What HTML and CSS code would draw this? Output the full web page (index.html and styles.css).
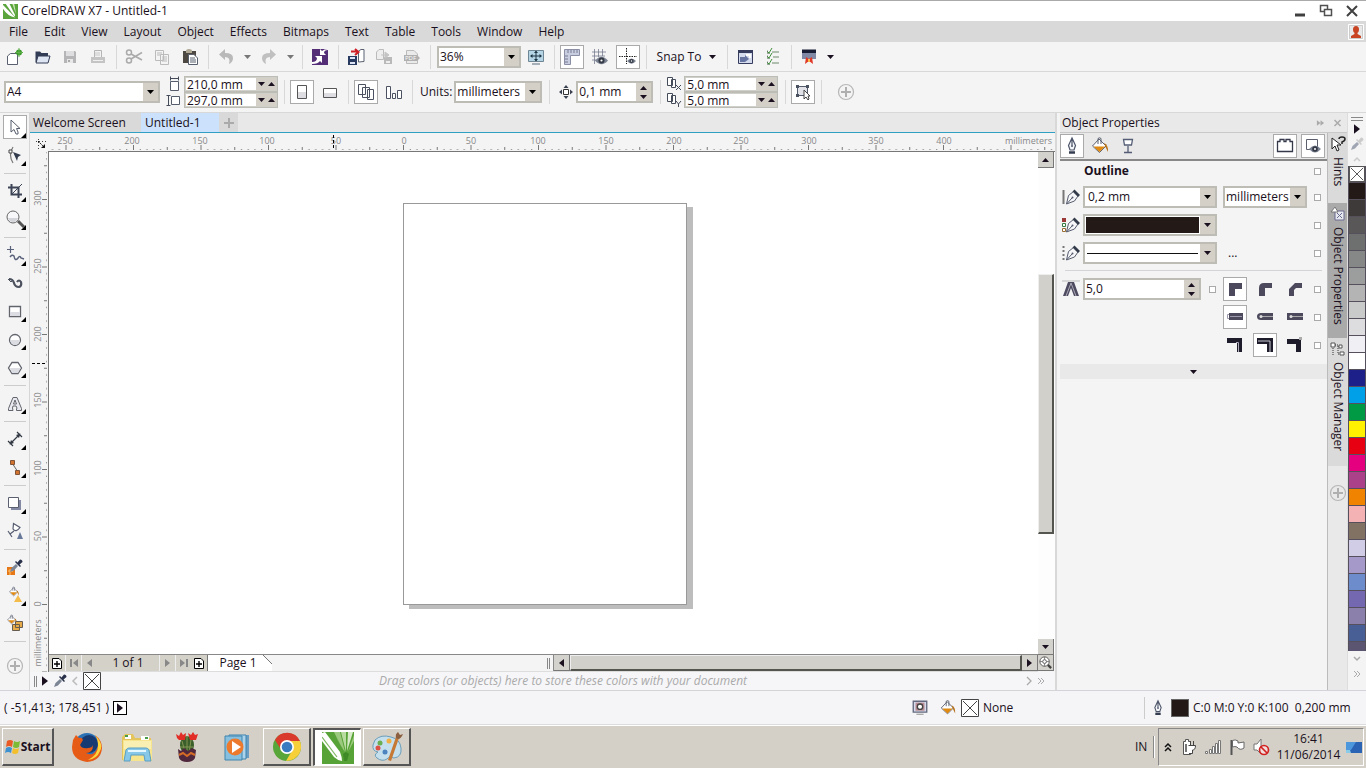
FILE: index.html
```html
<!DOCTYPE html>
<html lang="en">
<head>
<meta charset="utf-8">
<title>CorelDRAW X7 - Untitled-1</title>
<link rel="stylesheet" href="styles.css">
</head>
<body>
<svg class="sprite" aria-hidden="true">
  <symbol id="nib" viewBox="0 0 20 20"><path d="M10 2 L6.500 9.500 L8 14 H12 L13.500 9.500 Z M10 3 V9" fill="#f5f6fa" stroke="#4b5468" stroke-width="1.200"/><circle cx="10" cy="10" r="1" fill="#4b5468"/><path d="M7 16.500H13" stroke="#353d50" stroke-width="2.500"/></symbol>
  <symbol id="bucket" viewBox="0 0 20 20"><path d="M9 3 L16 10 L9.500 16.500 L2.500 10Z" fill="#fff" stroke="#596070"/><path d="M3.500 10.500H15L9.500 16Z" fill="#e08a12"/><path d="M8 8V2.500Q9.500 1 11 2.500V8" fill="none" stroke="#596070"/><path d="M14 7Q18.500 9 18 16L15.500 11Z" fill="#b8731c"/></symbol>
  <symbol id="dropper" viewBox="0 0 14 14"><path d="M1 13 L2.500 9 L7 5 L9 7 L5 11.500Z" fill="#7c8596"/><path d="M6 3 L11 8 L12 7 L10.500 5.500 L13.500 3 Q13.500 .5 11 .5 L8.500 3.500 L7 2Z" fill="currentColor"/></symbol>
  <symbol id="slantpen" viewBox="0 0 20 20"><path d="M5.500 17 L7.500 8.500 L12.500 4.500 L17 9 L13.500 14 Z M6 16.500 L11 11" fill="#f7f7f9" stroke="#555c6e"/><circle cx="11.500" cy="10.500" r="1" fill="#555c6e"/><path d="M13.500 2.500 L19 8 L17 10 L11.500 4.500Z" fill="#343c4b"/></symbol>
  <symbol id="plus" viewBox="0 0 20 20"><circle cx="10" cy="10" r="7.500" fill="none" stroke="#b6b6b6" stroke-width="1.200"/><path d="M10 5V15M5 10H15" stroke="#b0b0b0" stroke-width="2"/></symbol>
  <symbol id="leaf" viewBox="0 0 16 16"><path d="M0 0H16V16H0Z" fill="#59a53b"/><path d="M0 1L13 14.500Q5 13 0 5Z" fill="#fff"/><path d="M3 0H7L13 12L12 13Z" fill="#fff"/><path d="M10 0H12L14 11Z" fill="#cce4b8"/></symbol>
  <symbol id="eye" viewBox="0 0 12 8"><path d="M0 4Q6 -3 12 4Q6 11 0 4Z" fill="#7d8493"/><circle cx="6" cy="4" r="2.800" fill="#343a46"/><circle cx="6" cy="4" r="1" fill="#fff"/></symbol>
  <symbol id="corner" viewBox="0 0 6 6"><path d="M6 0V6H0Z" fill="#000"/></symbol>
  <symbol id="down" viewBox="0 0 7 4"><path d="M0 0H7L3.500 4Z" fill="currentColor"/></symbol>
  <symbol id="up" viewBox="0 0 7 4"><path d="M0 4H7L3.500 0Z" fill="currentColor"/></symbol>
  <symbol id="left" viewBox="0 0 5 8"><path d="M5 0V8L0 4Z" fill="currentColor"/></symbol>
  <symbol id="right" viewBox="0 0 5 8"><path d="M0 0V8L5 4Z" fill="currentColor"/></symbol>
  <symbol id="none" viewBox="0 0 18 18"><path d="M.5 .5H17.500V17.500H.5Z" fill="#fff" stroke="#444"/><path d="M2 2L16 16M16 2L2 16" stroke="#444"/></symbol>
  <symbol id="addpage" viewBox="0 0 12 12"><path d="M1.500 1.500H8L10.500 4V11.500H1.500Z" fill="#fff" stroke="#000"/><path d="M6 4V10M3 7H9" stroke="#000" stroke-width="1.400"/></symbol>
</svg>

<header class="titlebar">
  <svg class="app-logo" aria-hidden="true"><use href="#leaf"/></svg>
  <h1 class="title">CorelDRAW X7 - Untitled-1</h1>
  <div class="window-buttons">
    <button aria-label="Minimize"><svg viewBox="0 0 14 14"><path d="M2 11H12" stroke="#404040" stroke-width="3"/></svg></button>
    <button aria-label="Restore"><svg viewBox="0 0 14 14"><path d="M1.500 1.500H8.500V7.500H1.500Z" fill="#fff" stroke="#505050" stroke-width="1.500"/><path d="M5.500 5.500H12.500V11.500H5.500Z" fill="#fff" stroke="#505050" stroke-width="1.500"/></svg></button>
    <button aria-label="Close"><svg viewBox="0 0 14 14"><path d="M2 2L12 12M12 2L2 12" stroke="#404040" stroke-width="2"/></svg></button>
  </div>
</header>

<nav class="menubar" aria-label="Main menu">
  <button>File</button><button>Edit</button><button>View</button><button>Layout</button><button>Object</button><button>Effects</button><button>Bitmaps</button><button>Text</button><button>Table</button><button>Tools</button><button>Window</button><button>Help</button>
  <button class="account" aria-label="Account"><svg viewBox="0 0 16 16"><path d="M.5 .5H15.500V15.500H.5Z" fill="#e9e9e9" stroke="#fff"/><path d="M1.500 1.500H14.500V14.500H1.500Z" fill="none" stroke="#ccc"/><ellipse cx="8" cy="5.500" rx="3" ry="3.500" fill="#c84423"/><path d="M6.500 8H9.500V10L13 12V14H3V12L6.500 10Z" fill="#c84423"/></svg></button>
</nav>

<div class="toolbar" role="toolbar" aria-label="Standard">
  <button class="tool" aria-label="New"><svg viewBox="0 0 20 20"><path d="M3.500 17.500V9L6.500 6.500H13.500V17.500Z" fill="#fff" stroke="#5b6070"/><circle cx="15" cy="5.500" r="3" fill="#3b9a2a"/><path d="M15 1V10M11 5.500H19" stroke="#62b04c"/></svg></button>
  <button class="tool" aria-label="Open"><svg viewBox="0 0 20 20"><path d="M3.500 15V4.500H8L9.500 6H16V15Z" fill="#333c55"/><path d="M6 9H18L16 16H4Z" fill="#dfe6f3" stroke="#333c55"/></svg></button>
  <button class="tool" aria-label="Save"><svg viewBox="0 0 20 20"><path d="M4 4H15L16 5V16H4Z" fill="#b5b5b8"/><path d="M6 4H14V9H6Z" fill="#dedee0"/><path d="M7 12H13V16H7Z" fill="#e8e8e8"/><path d="M8 13H10V15H8Z" fill="#aaa"/></svg></button>
  <button class="tool" aria-label="Print"><svg viewBox="0 0 20 20"><path d="M6.500 10V3.500H13.500V10" fill="#f2f2f2" stroke="#b5b5b5"/><path d="M3 10H17V16H3Z" fill="#c4c4c4"/><path d="M5 13.500H15" stroke="#f0f0f0"/><path d="M7 6H12M7 8H12" stroke="#c8c8c8"/></svg></button>
  <span class="sep"></span>
  <button class="tool" aria-label="Cut"><svg viewBox="0 0 20 20" fill="none" stroke="#aaa" stroke-width="1.500"><circle cx="5" cy="5.500" r="2.500"/><circle cx="5" cy="13.500" r="2.500"/><path d="M7 7L18 13M7 12L18 5.500"/></svg></button>
  <button class="tool" aria-label="Copy"><svg viewBox="0 0 20 20" fill="#f4f4f4" stroke="#bbb"><path d="M3.500 3.500H11.500V13.500H3.500ZM8.500 7.500H16.500V17.500H8.500Z"/><path d="M5 6H10M5 8H8M10 10H15M10 12H15M10 14H15"/></svg></button>
  <button class="tool" aria-label="Paste"><svg viewBox="0 0 20 20"><path d="M3 4H16V16H3Z" fill="#4d4841"/><path d="M6 4Q6 2 9 2T12 4V6H6Z" fill="#b0a995"/><path d="M8.500 7.500H14L17.500 11V17.500H8.500Z" fill="#fff" stroke="#59606e"/><path d="M10 11H15M10 13H16M10 15H16" stroke="#59606e"/></svg></button>
  <span class="sep"></span>
  <button class="tool" aria-label="Undo"><svg viewBox="0 0 20 20"><path d="M3 7.500L9 2V6Q17 6 17 11Q17 15 13 17Q15 10 9 10V13Z" fill="#b9b9b9"/></svg></button>
  <button class="drop muted" aria-label="Undo list"><svg class="tri"><use href="#down"/></svg></button>
  <button class="tool" aria-label="Redo"><svg viewBox="0 0 20 20"><path d="M17 7.500L11 2V6Q3 6 3 11Q3 15 7 17Q5 10 11 10V13Z" fill="#c0c0c0"/></svg></button>
  <button class="drop muted" aria-label="Redo list"><svg class="tri"><use href="#down"/></svg></button>
  <span class="sep"></span>
  <button class="tool" aria-label="Search content"><svg viewBox="0 0 20 20"><path d="M2 2H18V18H2Z" fill="#542d77"/><path d="M2 15Q7 15 7 11L5 9H12V16L10 14Q8 17 2 17Z" fill="#fff"/><path d="M18 3Q14 3 14 6L16 8H10V2L12 4Q14 2 18 2Z" fill="#fff"/></svg></button>
  <span class="sep"></span>
  <button class="tool" aria-label="Import"><svg viewBox="0 0 20 20"><path d="M12.500 15V4L15 2.500H18V14.500Z" fill="#fff" stroke="#596070"/><path d="M2 9H11V18H2Z" fill="#283a60"/><path d="M4 10H9V12H4ZM4 15H9V17H4Z" fill="#dce4f5"/><path d="M5 4.500H11M9 2L12.500 5L9 8" fill="none" stroke="#cf2028" stroke-width="2"/></svg></button>
  <button class="tool" aria-label="Export"><svg viewBox="0 0 20 20"><path d="M2.500 12.500V5L5 2.500H9.500V12.500Z" fill="#eee" stroke="#bbb"/><path d="M10 10H18V17H10Z" fill="#b9b9b9"/><path d="M12 14H16V16H12Z" fill="#eee"/><path d="M7 8H13M11 5L15 8L11 11Z" fill="#c4c4c4" stroke="#c4c4c4"/></svg></button>
  <button class="tool" aria-label="Publish to PDF"><svg viewBox="0 0 20 20"><path d="M4.500 16.500V3.500H12L15.500 7V16.500Z" fill="#eaeaea" stroke="#bbb"/><path d="M2 8H15L18 11L15 14H2Z" fill="#b0b0b0"/><text x="3" y="13" font-size="6" fill="#fff">PDF</text></svg></button>
  <span class="sep"></span>
  <div class="field zoom-field"><select aria-label="Zoom level"><option>36%</option></select></div>
  <button class="tool" aria-label="Full-screen preview"><svg viewBox="0 0 20 20"><path d="M2.500 3.500H17.500V14.500H2.500Z" fill="#b5d5e6" stroke="#6f8794"/><path d="M10 4.500V13.500M5 9H15" stroke="#1d3444"/><path d="M10 3.500L12 6H8ZM10 14.500L12 12H8ZM4 9L6.500 7V11ZM16 9L13.500 7V11Z" fill="#1d3444"/><path d="M6 17H14" stroke="#8c99a5" stroke-width="1.500"/></svg></button>
  <span class="sep"></span>
  <button class="tool on" aria-label="Show rulers"><svg viewBox="0 0 20 20"><path d="M2.500 2.500H17.500V8.500H8.500V17.500H2.500Z" fill="#c9cde0" stroke="#8b8fa5"/><path d="M6 3V6M9 3V6M12 3V6M15 3V6M3 9H6M3 12H6M3 15H6" stroke="#777c95"/></svg></button>
  <button class="tool" aria-label="Show grid"><svg viewBox="0 0 20 20"><path d="M4.500 2V17M8.500 2V10M12.500 2V9M2 5H16M2 9H15M2 13H6" stroke="#777c8f" stroke-width=".8"/><use href="#eye" x="5" y="9" width="13" height="9"/></svg></button>
  <button class="tool on" aria-label="Show guidelines"><svg viewBox="0 0 20 20"><path d="M8.500 1V17M1 9.500H19" stroke="#222" stroke-dasharray="1.500 1"/><use href="#eye" x="9" y="11" width="9" height="6"/></svg></button>
  <span class="sep"></span>
  <button class="snap">Snap To <svg class="tri"><use href="#down"/></svg></button>
  <span class="sep"></span>
  <button class="tool" aria-label="Welcome screen"><svg viewBox="0 0 20 20"><path d="M3.500 3.500H17.500V16.500H3.500Z" fill="#d4dbee" stroke="#353c5d"/><path d="M3 3H18V6H3Z" fill="#353c5d"/><path d="M5 10H10V8L14 12L10 15H5Z" fill="#6674a2"/><path d="M11 7H16V11H14V9H11Z" fill="#fff"/></svg></button>
  <button class="tool" aria-label="Options"><svg viewBox="0 0 20 20" fill="none"><path d="M9 5H16M10 10H16M9 16H16" stroke="#6d8a6b" stroke-width="1.200"/><path d="M4 4L6 6L9 1M4 9L6 11L9 6M4 15L6 17L9 12" stroke="#3f9139"/><path d="M4.500 3.500V6.500H7M4.500 8.500V11.500H7M4.500 14.500V17.500H7" stroke="#627a62" stroke-width=".7"/></svg></button>
  <span class="sep"></span>
  <button class="tool" aria-label="Application launcher"><svg viewBox="0 0 20 20"><path d="M3 3H17V12H3Z" fill="#7f89a6"/><path d="M3 2.500H17V6H3Z" fill="#171d33"/><path d="M7 10L10 12L13 10L14 17L10 14L6 17Z" fill="#df3827"/><path d="M9 12H11V15H9Z" fill="#ffb84c"/></svg></button>
  <button class="drop" aria-label="Launcher list"><svg class="tri"><use href="#down"/></svg></button>
</div>

<div class="toolbar property-bar" role="toolbar" aria-label="Property bar">
  <div class="field page-size"><select aria-label="Page size"><option>A4</option></select></div>
  <div class="pair">
    <svg viewBox="0 0 16 16"><path d="M4.500 5.500H12.500V14.500H4.500Z" fill="#fff" stroke="#555c6c"/><path d="M4 2.500H13M4.500 .5V4.500M12.500 .5V4.500" stroke="#444b59"/></svg>
    <div class="mini"><input aria-label="Page width" value="210,0 mm"><span class="flat-spin"><button aria-label="Decrease width"><svg><use href="#down"/></svg></button><button aria-label="Increase width"><svg><use href="#up"/></svg></button></span></div>
    <svg viewBox="0 0 16 16"><path d="M5.500 4.500H13.500V12.500H5.500Z" fill="#fff" stroke="#555c6c"/><path d="M2.500 4V13M.5 3.500H4.500M.5 13.500H4.500" stroke="#444b59"/></svg>
    <div class="mini"><input aria-label="Page height" value="297,0 mm"><span class="flat-spin"><button aria-label="Decrease height"><svg><use href="#down"/></svg></button><button aria-label="Increase height"><svg><use href="#up"/></svg></button></span></div>
  </div>
  <span class="sep"></span>
  <button class="tool on" aria-label="Portrait"><svg viewBox="0 0 20 20"><path d="M5.500 3.500H14.500V16.500H5.500Z" fill="#fff" stroke="#555"/><path d="M6 10H14V16H6Z" fill="#dedee2"/></svg></button>
  <button class="tool" aria-label="Landscape"><svg viewBox="0 0 20 20"><path d="M3.500 6.500H16.500V15.500H3.500Z" fill="#fff" stroke="#555"/><path d="M4 11H16V15H4Z" fill="#dedee2"/></svg></button>
  <span class="sep"></span>
  <button class="tool on" aria-label="All pages"><svg viewBox="0 0 20 20" fill="#fff" stroke="#4a5262"><path d="M2.500 2.500H9.500V12.500H2.500ZM6.500 5.500H13.500V15.500H6.500ZM11.500 7.500H17.500V17.500H11.500Z"/></svg></button>
  <button class="tool" aria-label="Current page"><svg viewBox="0 0 20 20" fill="#fff" stroke="#4a5262"><path d="M2.500 4.500H6.500V16.500H2.500ZM8.500 11.500H11.500V16.500H8.500ZM13.500 8.500H17.500V16.500H13.500Z"/></svg></button>
  <span class="sep"></span>
  <div class="labelled"><label for="units">Units:</label><div class="field units"><select id="units"><option>millimeters</option></select></div></div>
  <span class="sep"></span>
  <div class="labelled tight">
    <svg viewBox="0 0 16 16"><path d="M5.500 5.500H10.500V10.500H5.500Z" fill="#fff" stroke="#333"/><path d="M8 1L10.500 4H5.500ZM8 15L10.500 12H5.500ZM1 8L4 5.500V10.500ZM15 8L12 5.500V10.500Z" fill="#3a4150"/></svg>
    <div class="field spin nudge"><input aria-label="Nudge distance" value="0,1 mm"><span class="stack-spin"><button aria-label="Increase nudge"><svg><use href="#up"/></svg></button><button aria-label="Decrease nudge"><svg><use href="#down"/></svg></button></span></div>
  </div>
  <span class="sep"></span>
  <div class="pair offset">
    <svg viewBox="0 0 16 16"><path d="M1.500 1.500H6.500V9.500H1.500ZM5.500 3.500H9.500V11.500H5.500Z" fill="#fff" stroke="#444b59"/><path d="M10 9L15 14M15 9L10 14" stroke="#444b59"/></svg>
    <div class="mini"><input aria-label="Duplicate distance X" value="5,0 mm"><span class="flat-spin"><button aria-label="Decrease X"><svg><use href="#down"/></svg></button><button aria-label="Increase X"><svg><use href="#up"/></svg></button></span></div>
    <svg viewBox="0 0 16 16"><path d="M1.500 1.500H6.500V9.500H1.500ZM5.500 3.500H9.500V11.500H5.500Z" fill="#fff" stroke="#444b59"/><path d="M10 9L12.500 12L15 9M12.500 12V15" fill="none" stroke="#444b59"/></svg>
    <div class="mini"><input aria-label="Duplicate distance Y" value="5,0 mm"><span class="flat-spin"><button aria-label="Decrease Y"><svg><use href="#down"/></svg></button><button aria-label="Increase Y"><svg><use href="#up"/></svg></button></span></div>
  </div>
  <span class="sep"></span>
  <button class="tool on" aria-label="Treat as filled"><svg viewBox="0 0 20 20"><path d="M4.500 4.500H14.500V13.500H4.500Z" fill="#e2e3e8" stroke="#555c6c"/><path d="M3 3H6V6H3ZM13 3H16V6H13ZM3 12H6V15H3Z" fill="#4a5160"/><path d="M11 8V17L13 15L15 18L16 17L15 14H17Z" fill="#fff" stroke="#444"/></svg></button>
  <span class="sep"></span>
  <button class="tool add" aria-label="Customize property bar"><svg><use href="#plus"/></svg></button>
</div>

<main class="workspace">
  <div class="toolbox" role="toolbar" aria-label="Toolbox" aria-orientation="vertical">
    <button class="tool on" aria-label="Pick"><svg viewBox="0 0 20 20"><path d="M6 3V15L9 12.500L11 17H13V15L11.500 11.500H15Z" fill="#fff" stroke="#555c6c"/></svg><svg class="flyout"><use href="#corner"/></svg></button>
    <button class="tool" aria-label="Shape"><svg viewBox="0 0 20 20"><path d="M8 2Q3 10 8 18" fill="none" stroke="#777" stroke-width="1.200"/><path d="M4 5H7V8H4Z" fill="#fff" stroke="#444"/><path d="M8 7L16 10L13 12L12 16Z" fill="#333c4d"/></svg><svg class="flyout"><use href="#corner"/></svg></button>
    <span class="rule"></span>
    <button class="tool" aria-label="Crop"><svg viewBox="0 0 20 20"><path d="M6.500 3V13.500H17M3 6.500H13.500V17" fill="none" stroke="#3c4456" stroke-width="2"/><path d="M7 13L17 3" stroke="#3c4456"/></svg><svg class="flyout"><use href="#corner"/></svg></button>
    <button class="tool" aria-label="Zoom"><svg viewBox="0 0 20 20"><path d="M13 12L19 18" stroke="#555" stroke-width="3"/><circle cx="8" cy="8" r="6" fill="#f8f8fa" stroke="#666"/><path d="M3 9H13Q12 13 8 13T3 9" fill="#d4d5db"/></svg><svg class="flyout"><use href="#corner"/></svg></button>
    <span class="rule"></span>
    <button class="tool" aria-label="Freehand"><svg viewBox="0 0 20 20" fill="none" stroke="#59617b"><path d="M5.500 1V8M2 4.500H9" stroke-width="1.200"/><path d="M5 12Q7 9 9 11Q10 17 13 13Q15 10 16 13L19 14" stroke-width="1.500"/></svg><svg class="flyout"><use href="#corner"/></svg></button>
    <button class="tool" aria-label="Artistic media"><svg viewBox="0 0 20 20"><path d="M4 6Q8 6 9 10Q10 14 14 14Q17 13 16 9Q14 6 12 9" fill="none" stroke="#4c515e" stroke-width="2.200"/><path d="M3 6L6 9L8 7" fill="none" stroke="#4c515e"/></svg></button>
    <button class="tool" aria-label="Rectangle"><svg viewBox="0 0 20 20"><path d="M4.500 5.500H15.500V15.500H4.500Z" fill="#fff" stroke="#62656d" stroke-width="1.300"/><path d="M5 11H15V15H5Z" fill="#dcdde2"/></svg><svg class="flyout"><use href="#corner"/></svg></button>
    <button class="tool" aria-label="Ellipse"><svg viewBox="0 0 20 20"><circle cx="10" cy="11" r="5.500" fill="#fff" stroke="#62656d" stroke-width="1.300"/><path d="M5 11H15Q14 16 10 16T5 11" fill="#dcdde2"/></svg><svg class="flyout"><use href="#corner"/></svg></button>
    <button class="tool" aria-label="Polygon"><svg viewBox="0 0 20 20"><path d="M7 5.500H13L16.500 11L13 16.500H7L3.500 11Z" fill="#fff" stroke="#62656d" stroke-width="1.300"/><path d="M5 11H15.500L13 16H7Z" fill="#dcdde2"/></svg><svg class="flyout"><use href="#corner"/></svg></button>
    <span class="rule"></span>
    <button class="tool" aria-label="Text"><svg viewBox="0 0 20 20"><path d="M3.500 17.500V15.500L8 4.500H12L16.500 15.500V17.500H11.500V16L12 15L11 13H8L7.500 15L8 17.500ZM8.500 11H11.500L10 7Z" fill="#e8e8ef" stroke="#62656d"/></svg><svg class="flyout"><use href="#corner"/></svg></button>
    <span class="rule"></span>
    <button class="tool" aria-label="Dimension"><svg viewBox="0 0 20 20"><path d="M5 15L15 5M3 12L8 17M12 3L17 8" stroke="#333a43" stroke-width="1.200"/><path d="M4.500 15.500L6 11L9 14ZM15.500 4.500L14 9L11 6Z" fill="#333a43"/></svg><svg class="flyout"><use href="#corner"/></svg></button>
    <button class="tool" aria-label="Connector"><svg viewBox="0 0 20 20"><path d="M7 6L13 15" stroke="#666"/><path d="M5.500 3.500H9.500V7.500H5.500ZM10.500 13.500H14.500V17.500H10.500Z" fill="#d2732f" stroke="#80553a"/></svg><svg class="flyout"><use href="#corner"/></svg></button>
    <span class="rule"></span>
    <button class="tool" aria-label="Drop shadow"><svg viewBox="0 0 20 20"><path d="M6 7H16V17H6Z" fill="#858aa4"/><path d="M3.500 4.500H13.500V14.500H3.500Z" fill="#fff" stroke="#5b6070"/></svg><svg class="flyout"><use href="#corner"/></svg></button>
    <button class="tool" aria-label="Transparency"><svg viewBox="0 0 20 20"><path d="M8.500 2.500L15 6.500Q11 12 8 8ZM9 10L5 13M3 10L7 16" fill="#fff" stroke="#555d70" stroke-width="1.200"/><path d="M15 11L18 18H12Z" fill="#697999"/></svg></button>
    <span class="rule"></span>
    <button class="tool" aria-label="Color eyedropper"><svg class="dark" viewBox="0 0 20 20"><path d="M2 10H10V18H2Z" fill="#e67818"/><path d="M3 14H8M5 12V18" stroke="#ffc46c"/><use href="#dropper" x="4" y="2" width="14" height="14"/></svg><svg class="flyout"><use href="#corner"/></svg></button>
    <button class="tool" aria-label="Interactive fill"><svg viewBox="0 0 20 20"><use href="#bucket" x="3" y="1" width="12" height="12"/><path d="M13 10L17 17H9Z" fill="#f4bd4b"/></svg><svg class="flyout"><use href="#corner"/></svg></button>
    <button class="tool" aria-label="Smart fill"><svg viewBox="0 0 20 20"><use href="#bucket" x="1" y="1" width="12" height="12"/><path d="M10.500 8.500H17.500V14.500H10.500ZM7.500 11.500H14.500V17.500H7.500Z" fill="#e6aa48" stroke="#665d50"/></svg></button>
    <span class="rule"></span>
    <button class="tool add" aria-label="Customize toolbox"><svg><use href="#plus"/></svg></button>
  </div>

  <section class="editor">
    <div class="doc-tabs" role="tablist">
      <button role="tab" class="doc-tab">Welcome Screen</button>
      <button role="tab" class="doc-tab current" aria-selected="true">Untitled-1</button>
      <button class="new-doc" aria-label="New document"><svg viewBox="0 0 12 12"><path d="M6 1V11M1 6H11" stroke="#aaa" stroke-width="2"/></svg></button>
    </div>
    <svg class="ruler-h" aria-hidden="true">
      <defs><pattern id="ticks-h" patternUnits="userSpaceOnUse" x="373" y="0" width="67.500" height="18"><path d="M0 12H1V17H0ZM33.750 14H34.750V17H33.750Z" fill="#777"/><path d="M6.750 16.500H67" stroke="#777" stroke-dasharray="1 5.750"/></pattern></defs>
      <rect class="ticks" x="18" width="100%" height="18" fill="url(#ticks-h)"/>
      <path d="M18 18.500H4000" stroke="#777"/>
      <path d="M8 8L14 14" stroke="#111" stroke-dasharray="2 1"/><path d="M15 11V15H11Z" fill="#111"/><path d="M6 8.500H16M8.500 6V16" stroke="#444" stroke-dasharray="1 2"/>
      <g class="marks" text-anchor="middle"><text x="35" y="11">250</text><text x="102" y="11">200</text><text x="170" y="11">150</text><text x="237" y="11">100</text><text x="306" y="11">50</text><text x="374" y="11">0</text><text x="441" y="11">50</text><text x="508" y="11">100</text><text x="576" y="11">150</text><text x="644" y="11">200</text><text x="711" y="11">250</text><text x="779" y="11">300</text><text x="846" y="11">350</text><text x="914" y="11">400</text></g>
      <text class="marks" x="100%" dx="-3" y="11" text-anchor="end">millimeters</text>
      <path d="M303.500 2V17" stroke="#000" stroke-dasharray="3 2"/>
    </svg>
    <div class="stage">
      <svg class="ruler-v" aria-hidden="true">
        <defs><pattern id="ticks-v" patternUnits="userSpaceOnUse" x="0" y="452" width="18" height="67.500"><path d="M12 0H17V1H12ZM14 33.750H17V34.750H14Z" fill="#777"/><path d="M16.500 6.750V67" stroke="#777" stroke-dasharray="1 5.750"/></pattern></defs>
        <rect class="ticks" width="18" height="100%" fill="url(#ticks-v)"/>
        <path d="M18.500 0V4000" stroke="#777"/>
        <g class="marks" text-anchor="middle"><text transform="translate(11 46) rotate(-90)">300</text><text transform="translate(11 114) rotate(-90)">250</text><text transform="translate(11 182) rotate(-90)">200</text><text transform="translate(11 248) rotate(-90)">150</text><text transform="translate(11 316) rotate(-90)">100</text><text transform="translate(11 384) rotate(-90)">50</text><text transform="translate(11 452) rotate(-90)">0</text><text transform="translate(11 491) rotate(-90)">millimeters</text></g>
        <path d="M2 211.500H17" stroke="#000" stroke-dasharray="3 2"/>
      </svg>
      <div class="view">
        <div class="canvas"><div class="paper"></div></div>
        <div class="vscroll">
          <button aria-label="Scroll up"><svg class="tri"><use href="#up"/></svg></button>
          <div class="track-v"><div class="thumb"></div></div>
          <button aria-label="Scroll down"><svg class="tri"><use href="#down"/></svg></button>
        </div>
        <div class="page-row">
          <div class="page-nav">
            <button aria-label="Add page before"><svg class="sheet"><use href="#addpage"/></svg></button>
            <button class="dim" aria-label="First page"><svg viewBox="0 0 8 8" class="first"><path d="M1 0V8" stroke="#888" stroke-width="2"/><path d="M8 0V8L3 4Z" fill="#888"/></svg></button>
            <button class="dim" aria-label="Previous page"><svg class="side"><use href="#left"/></svg></button>
            <span class="count">1 of 1</span>
            <button class="dim" aria-label="Next page"><svg class="side"><use href="#right"/></svg></button>
            <button class="dim" aria-label="Last page"><svg viewBox="0 0 8 8" class="first"><path d="M7 0V8" stroke="#888" stroke-width="2"/><path d="M0 0V8L5 4Z" fill="#888"/></svg></button>
            <button aria-label="Add page after"><svg class="sheet"><use href="#addpage"/></svg></button>
          </div>
          <button class="page-tab">Page 1</button>
          <span class="grip"></span>
          <div class="hscroll">
            <button aria-label="Scroll left"><svg class="side"><use href="#left"/></svg></button>
            <div class="thumb"></div>
            <button aria-label="Scroll right"><svg class="side"><use href="#right"/></svg></button>
          </div>
        </div>
        <button class="navigator" aria-label="Navigator"><svg viewBox="0 0 16 16"><path d="M10 10L14 14" stroke="#444" stroke-width="2.500"/><circle cx="7" cy="7" r="5" fill="#fff" stroke="#555"/><circle cx="7" cy="7" r="2" fill="#fff" stroke="#555"/><path d="M7 2V5M7 9V12M2 7H5M9 7H12" stroke="#777"/></svg></button>
      </div>
    </div>
    <div class="doc-palette">
      <span class="grip"></span>
      <button aria-label="Palette menu"><svg class="play"><use href="#right"/></svg></button>
      <button aria-label="Eyedropper"><svg class="drop-icon dark"><use href="#dropper"/></svg></button>
      <button aria-label="Scroll left"><svg viewBox="0 0 8 10" class="chev"><path d="M6 1L2 5L6 9" fill="none" stroke="#bbb" stroke-width="1.500"/></svg></button>
      <button aria-label="No color"><svg class="none"><use href="#none"/></svg></button>
      <p>Drag colors (or objects) here to store these colors with your document</p>
      <button aria-label="Scroll right"><svg viewBox="0 0 8 10" class="chev"><path d="M2 1L6 5L2 9" fill="none" stroke="#aaa" stroke-width="1.300"/></svg></button>
      <button aria-label="Expand"><svg viewBox="0 0 8 10" class="chev"><path d="M1 2L4 5L1 8M4 2L7 5L4 8" fill="none" stroke="#aaa"/></svg></button>
    </div>
  </section>

  <div class="docker-area">
    <header class="docker-title"><h2>Object Properties</h2>
      <button aria-label="Collapse docker"><svg viewBox="0 0 10 8"><path d="M1 1L5 4L1 7ZM5 1L9 4L5 7Z" fill="#aaa"/></svg></button>
      <button aria-label="Close docker"><svg viewBox="0 0 8 8"><path d="M1 1L7 7M7 1L1 7" stroke="#aaa" stroke-width="1.500"/></svg></button>
    </header>
    <aside class="docker" aria-label="Object Properties">
      <div class="docker-tools">
        <button class="tool on" aria-label="Outline"><svg><use href="#nib"/></svg></button>
        <button class="tool" aria-label="Fill"><svg><use href="#bucket"/></svg></button>
        <button class="tool" aria-label="Transparency"><svg viewBox="0 0 20 20"><path d="M5.500 3.500H14.500L13.500 9H6.500ZM7 9H13M10 10V16M6 16.500H14" fill="#fff" stroke="#535d76" stroke-width="1.300"/></svg></button>
        <span class="fill"></span>
        <button class="tool on" aria-label="Scroll mode"><svg viewBox="0 0 20 20"><path d="M2.500 5.500H5V3.500H9V5.500H11V3.500H15V5.500H17.500V15.500H2.500Z" fill="#fff" stroke="#353a4b" stroke-width="1.300"/></svg></button>
        <button class="tool on" aria-label="Show preview"><svg viewBox="0 0 20 20"><path d="M3.500 3.500H14.500V13.500H3.500Z" fill="#fff" stroke="#59606c"/><use href="#eye" x="6" y="9" width="12" height="8"/></svg></button>
      </div>
      <div class="props">
        <div class="row heading"><h3>Outline</h3><input type="checkbox" aria-label="Lock outline"></div>
        <div class="row"><svg class="row-icon" viewBox="0 0 20 20"><path d="M2.500 3V17" stroke="#777" stroke-width="2"/><use href="#slantpen" width="20" height="20"/></svg>
          <div class="field wide"><select class="roomy" aria-label="Outline width"><option>0,2 mm</option></select></div>
          <div class="field unit2"><select aria-label="Outline units"><option>millimeters</option></select></div><input type="checkbox" aria-label="Lock width"></div>
        <div class="row"><svg class="row-icon" viewBox="0 0 20 20"><path d="M1 3H5V7H1Z" fill="#9b3939"/><path d="M1.500 8.500H4.500V11.500H1.500Z" fill="#fff" stroke="#347a42"/><path d="M1.500 13.500H4.500V16.500H1.500Z" fill="#fff" stroke="#986c32"/><use href="#slantpen" width="20" height="20"/></svg>
          <button class="field wide swatch-combo" aria-label="Outline color"><span class="ink"></span><span class="combo-arrow"><svg class="tri"><use href="#down"/></svg></span></button><span class="fill"></span><input type="checkbox" aria-label="Lock color"></div>
        <div class="row"><svg class="row-icon" viewBox="0 0 20 20"><path d="M2.500 3V17" stroke="#777" stroke-width="2" stroke-dasharray="2 2"/><use href="#slantpen" width="20" height="20"/></svg>
          <button class="field wide swatch-combo" aria-label="Line style"><span class="stroke"></span><span class="combo-arrow"><svg class="tri"><use href="#down"/></svg></span></button><button class="more" aria-label="Outline settings">...</button><span class="fill"></span><input type="checkbox" aria-label="Lock style"></div>
        <hr>
        <div class="row"><svg class="row-icon" viewBox="0 0 20 20"><path d="M1 2H19" stroke="#bbb"/><path d="M2 17L7 3H13L18 17H13L10 9L7 17Z" fill="#4e4b60"/><path d="M5 17L10 4L15 17" fill="none" stroke="#aaa9b5"/></svg>
          <div class="field spin miter"><input aria-label="Miter limit" value="5,0"><span class="stack-spin"><button aria-label="Increase limit"><svg><use href="#up"/></svg></button><button aria-label="Decrease limit"><svg><use href="#down"/></svg></button></span></div>
          <input type="checkbox" aria-label="Lock miter limit">
          <div class="trio">
            <button class="tool on" aria-label="Mitered corners"><svg viewBox="0 0 20 20"><path d="M4 4H17V10H10V17H4Z" fill="#4c495d"/></svg></button>
            <button class="tool" aria-label="Round corners"><svg viewBox="0 0 20 20"><path d="M4 17V9Q4 4 9 4H17V9H10V17Z" fill="#4c495d"/></svg></button>
            <button class="tool" aria-label="Beveled corners"><svg viewBox="0 0 20 20"><path d="M4 17V10L10 4H17V9H11L9 11V17Z" fill="#4c495d"/></svg></button>
          </div><input type="checkbox" aria-label="Lock corners"></div>
        <div class="row">
          <div class="trio">
            <button class="tool on" aria-label="Square cap"><svg viewBox="0 0 20 20"><path d="M4 6H18V13H4Z" fill="#4c495d"/><path d="M2.500 7.500V11.500H4M5 9.500H17M2.500 7.500H4" fill="none" stroke="#9a9aac"/></svg></button>
            <button class="tool" aria-label="Round cap"><svg viewBox="0 0 20 20"><path d="M6 6H18V13H6Q2 13 2 9.500T6 6" fill="#4c495d"/><path d="M7 9.500H18" stroke="#aaa"/><circle cx="6" cy="9.500" r="1.500" fill="#ddd"/></svg></button>
            <button class="tool" aria-label="Extended cap"><svg viewBox="0 0 20 20"><path d="M2 6H18V13H2Z" fill="#4c495d"/><path d="M7 9.500H18" stroke="#aaa"/><circle cx="6" cy="9.500" r="1.500" fill="#ddd"/></svg></button>
          </div><input type="checkbox" aria-label="Lock caps"></div>
        <div class="row">
          <div class="trio">
            <button class="tool" aria-label="Outside outline"><svg viewBox="0 0 20 20"><path d="M2 3H17V17H12V8H2Z" fill="#1e1c2b"/><path d="M11 7.500H13.500V17" fill="none" stroke="#aab"/></svg></button>
            <button class="tool on" aria-label="Centered outline"><svg viewBox="0 0 20 20"><path d="M2 3H18V17H12V9H2Z" fill="#1e1c2b"/><path d="M3 6H15V17" fill="none" stroke="#c8c8d4"/></svg></button>
            <button class="tool" aria-label="Inside outline"><svg viewBox="0 0 20 20"><path d="M2 4H16V17H11V9H2Z" fill="#1e1c2b"/><path d="M14 2H17V5H14Z" fill="#aaa"/></svg></button>
          </div><input type="checkbox" aria-label="Lock position"></div>
        <button class="expander" aria-label="More options"><svg class="tri"><use href="#down"/></svg></button>
      </div>
    </aside>

    <div class="side-tabs" role="tablist" aria-orientation="vertical">
      <button role="tab" class="hints"><svg viewBox="0 0 16 16"><path d="M2 2V13L5 10L7 15L9 14L7 9H11Z" fill="#fff" stroke="#222"/><path d="M9 3Q9 1 12 1T15 3Q15 5 12 6V8" fill="none" stroke="#222" stroke-width="1.500"/></svg><span>Hints</span></button>
      <button role="tab" class="active" aria-selected="true"><svg viewBox="0 0 16 16"><path d="M5 5H14V14H5Z" fill="#e8e8ef" stroke="#686b91"/><path d="M7 7L12 12M12 7L7 12" stroke="#686b91"/><path d="M1 6L5 1L8 6Z" fill="#fff" stroke="#777"/></svg><span>Object Properties</span></button>
      <button role="tab" class="manager"><svg viewBox="0 0 16 16"><path d="M1 2H5V6H1ZM9 4H12V7H9ZM10 11H14V14H10Z" fill="#fff" stroke="#555"/><path d="M5 4H8V13H10M3 7V15" fill="none" stroke="#333" stroke-dasharray="1 1"/></svg><span>Object Manager</span></button>
      <button class="side-add" aria-label="Add docker"><svg><use href="#plus"/></svg></button>
    </div>
  </div>

  <div class="palette" aria-label="Default palette">
    <span class="grip-h"></span>
    <button aria-label="Palette menu"><svg class="play"><use href="#right"/></svg></button>
    <button aria-label="Eyedropper"><svg class="drop-icon light"><use href="#dropper"/></svg></button>
    <button aria-label="Scroll up"><svg viewBox="0 0 8 6" class="vchev"><path d="M1 5L4 2L7 5" fill="none" stroke="#ccc" stroke-width="1.500"/></svg></button>
    <div class="swatches">
      <button aria-label="None"><svg><use href="#none"/></svg></button>
      <button class="c-k100" aria-label="Black"></button><button class="c-k90" aria-label="90% black"></button><button class="c-k80" aria-label="80% black"></button><button class="c-k70" aria-label="70% black"></button><button class="c-k60" aria-label="60% black"></button><button class="c-k50" aria-label="50% black"></button><button class="c-k40" aria-label="40% black"></button><button class="c-k30" aria-label="30% black"></button><button class="c-k20" aria-label="20% black"></button><button class="c-k10" aria-label="10% black"></button><button class="c-white" aria-label="White"></button><button class="c-blue" aria-label="Blue"></button><button class="c-cyan" aria-label="Cyan"></button><button class="c-green" aria-label="Green"></button><button class="c-yellow" aria-label="Yellow"></button><button class="c-red" aria-label="Red"></button><button class="c-magenta" aria-label="Magenta"></button><button class="c-purple" aria-label="Purple"></button><button class="c-orange" aria-label="Orange"></button><button class="c-pink" aria-label="Pink"></button><button class="c-brown" aria-label="Brown"></button><button class="c-pale" aria-label="Pale violet"></button><button class="c-lilac" aria-label="Lilac"></button><button class="c-sky" aria-label="Sky blue"></button><button class="c-violet" aria-label="Violet"></button><button class="c-mauve" aria-label="Mauve"></button><button class="c-steel" aria-label="Steel blue"></button><button class="c-slate" aria-label="Slate"></button>
    </div>
    <button aria-label="Scroll down"><svg viewBox="0 0 8 6" class="vchev"><path d="M1 1L4 4L7 1" fill="none" stroke="#aaa" stroke-width="1.500"/></svg></button>
    <button aria-label="Expand palette"><svg viewBox="0 0 8 10" class="chev"><path d="M1 2L4 5L1 8M4 2L7 5L4 8" fill="none" stroke="#aaa"/></svg></button>
  </div>
</main>

<footer class="status">
  <div class="coords"><output>( -51,413; 178,451 )</output><button aria-label="Status details"><svg class="play"><use href="#right"/></svg></button></div>
  <div class="fill-info"><svg class="s20" viewBox="0 0 20 20"><path d="M2.500 2.500H17.500V14.500H2.500Z" fill="#d7dcef" stroke="#63697e" stroke-width="1.500"/><path d="M5 4H15V13H5Z" fill="#b98c91"/><circle cx="10" cy="8.500" r="3" fill="#fff" stroke="#444" stroke-width="1.500"/><path d="M6 17H14" stroke="#aaa" stroke-width="1.500"/></svg><svg class="s20"><use href="#bucket"/></svg><svg class="none"><use href="#none"/></svg><span>None</span></div>
  <div class="outline-info"><svg class="s20"><use href="#nib"/></svg><span class="black-chip"></span><span>C:0 M:0 Y:0 K:100&nbsp; 0,200 mm</span></div>
</footer>

<footer class="taskbar">
  <button class="start"><svg viewBox="0 0 16 16"><path d="M2 2Q5 0 8 2L7 8Q4 6 1 8Z" fill="#e95a25"/><path d="M9 2Q12 4 15 2L14 8Q11 10 8 8Z" fill="#7dbb36"/><path d="M1 9Q4 7 7 9L6 14Q3 12 0 14Z" fill="#3e91d0"/><path d="M8 9Q11 11 14 9L13 14Q10 16 7 14Z" fill="#f4bf2c"/></svg>Start</button>
  <div class="apps">
    <button aria-label="Firefox"><svg viewBox="0 0 32 32"><circle cx="16" cy="15" r="13" fill="#2d71b5"/><circle cx="18" cy="13" r="9" fill="#173a72"/><path d="M2 9L5 4L8 7Q11 6 12 9L9 14Q11 18 17 17Q21 17 22 14Q22 22 15 22Q22 26 26 18Q29 11 24 4Q31 9 31 17Q30 30 16 31Q1 29 1 16Z" fill="#e65b16"/><path d="M24 4Q33 13 29 20Q26 28 17 29Q27 24 27 15Q27 8 24 4Z" fill="#ffd33c"/></svg></button>
    <button aria-label="Explorer"><svg viewBox="0 0 32 32"><path d="M1 6L4 3H12L14 7H30V29H1Z" fill="#e3c45d"/><path d="M4 4H10V8H4ZM20 5H28V9H20Z" fill="#fff"/><path d="M4 4H7V6H4ZM24 6H27V8H24Z" fill="#4a9b48"/><path d="M2 9H31V30H2Z" fill="#f7e58d"/><path d="M3 10H30V18H3Z" fill="#faefb3"/><path d="M3 30L5 19Q6 17 8 17H25Q27 17 28 19L30 30H24L23 24H10L9 30Z" fill="#87c8e8" stroke="#5a9ec2"/><path d="M7 20H25" stroke="#e5f7ff" stroke-width="2"/></svg></button>
    <button aria-label="Cactus"><svg viewBox="0 0 32 32"><ellipse cx="16" cy="14" rx="7" ry="9" fill="#3b5f2a"/><path d="M11 10L14 21M20 9L18 22M9 16H22M16 5V20" stroke="#819552"/><path d="M5 3L8 5L10 1L12 4L15 2L14 9H8L6 7ZM17 2L20 4L22 1L24 4L27 3L25 9H19Z" fill="#e22c26"/><path d="M7 18L10 20L13 17L17 20L21 17L25 19L24 27Q22 31 16 31Q10 31 8 27Z" fill="#50283d"/><path d="M8 24L12 22L16 25L20 22L24 24" stroke="#d46b26" stroke-width="2" fill="none"/></svg></button>
    <button aria-label="Media player"><svg viewBox="0 0 32 32"><path d="M11 4H28V27H11Z" fill="#6b9dc2"/><path d="M8 4H25V28H8Z" fill="#aed4ec" stroke="#3c83ae"/><path d="M4 5H21V29H4Z" fill="#87bfdf" stroke="#3e85ae"/><circle cx="14" cy="16" r="8.500" fill="#ec792c"/><path d="M11 10L20 16L11 22Z" fill="#fff"/></svg></button>
    <button class="open" aria-label="Chrome"><svg viewBox="0 0 32 32"><circle cx="16" cy="16" r="14" fill="#58a639"/><path d="M4 9A14 14 0 0 1 29 10H16L11 20Z" fill="#d93a2b"/><path d="M16 10H29Q33 21 23 28Q19 30 15 30L22 18Z" fill="#f7cf39"/><circle cx="16" cy="16" r="7" fill="#fff"/><circle cx="16" cy="16" r="5.300" fill="#397bc0"/></svg></button>
    <button class="open running" aria-label="CorelDRAW"><svg viewBox="0 0 32 32"><path d="M0 0H32V32H0Z" fill="#58a337"/><path d="M0 1L3 0L18 20Q20 25 20 29Q15 28 12 25L0 9Z" fill="#fff"/><path d="M0 5L15 25" stroke="#7fb860" stroke-width="1.200"/><path d="M12 0H18L23 20Q19 15 12 0Z" fill="#9bc97d"/><path d="M19 0H24V20Z" fill="#b8dba0"/><path d="M26 0H31L25 19Z" fill="#d7ebc9"/><path d="M32 3V9L26 20Z" fill="#9bc97d"/><path d="M21 22L24 20L27 22L25 29H22Z" fill="#3d8a27"/></svg></button>
    <button class="open" aria-label="Paint"><svg viewBox="0 0 32 32"><path d="M4 9Q10 3 20 6Q29 8 30 17Q31 26 23 27Q18 25 16 28Q11 31 6 27Q2 24 7 21Q1 20 2 14Z" fill="#c5dfed" stroke="#6b9eb9"/><circle cx="9" cy="12" r="2.500" fill="#69ae50"/><circle cx="18" cy="10" r="2.500" fill="#f3b143"/><circle cx="7" cy="17" r="2.500" fill="#dc5144"/><circle cx="14" cy="21" r="2.500" fill="#4b84bf"/><path d="M17 29L25 6L28 7L20 30Z" fill="#c67935"/><path d="M25 7Q24 3 27 1L29 4L32 3Q30 8 27 8Z" fill="#8b6040"/></svg></button>
  </div>
  <span class="lang">IN</span>
  <span class="tray-rule"></span>
  <div class="tray">
    <button aria-label="Show hidden icons"><svg class="t10" viewBox="0 0 8 10"><path d="M1 5L4 2L7 5M1 9L4 6L7 9" fill="none" stroke="#111" stroke-width="1.500"/></svg></button>
    <button aria-label="Power"><svg viewBox="0 0 18 18"><path d="M3.500 3.500H5.500V1.500H8.500V3.500H10.500V16.500H3.500Z" fill="#fff" stroke="#555"/><path d="M10.500 3V7M13.500 3V7" stroke="#444"/><path d="M8.500 7.500H15.500Q15.500 12 12.500 12V15.500H9" fill="#fff" stroke="#444"/><path d="M6 6V14" stroke="#777" stroke-width="2"/></svg></button>
    <button aria-label="Network"><svg viewBox="0 0 18 18" fill="#fff" stroke="#777"><path d="M1.500 13.500H3.500V15.500H1.500ZM5.500 11.500H7.500V15.500H5.500ZM8.500 8.500H10.500V15.500H8.500ZM11.500 5.500H13.500V15.500H11.500ZM14.500 2.500H16.500V15.500H14.500Z"/></svg></button>
    <button aria-label="Action center"><svg viewBox="0 0 18 18"><path d="M3.500 2V17" stroke="#555" stroke-width="2"/><path d="M4.500 2.500Q7 1 10 3V5L16 4V10Q12 13 9 9Q7 8 4.500 9Z" fill="#fff" stroke="#666"/></svg></button>
    <button aria-label="Volume muted"><svg viewBox="0 0 18 18"><path d="M2 6H5L9 1V16L5 12H2Z" fill="#fff" stroke="#777"/><circle cx="12" cy="12" r="4.500" fill="#f2dddd" stroke="#d12222" stroke-width="1.700"/><path d="M9 9L15 15" stroke="#d12222" stroke-width="1.700"/></svg></button>
    <div class="clock"><time>16:41</time><time>11/06/2014</time></div>
    <button class="desk" aria-label="Show desktop"><svg viewBox="0 0 18 18"><path d="M1 4H17V15H1Z" fill="#2a62b4"/><path d="M1 4H11L6 12H1Z" fill="#4d97dc"/><path d="M1 12H5L6 15H1Z" fill="#8acbea"/></svg></button>
  </div>
</footer>
</body>
</html>
```
FILE: styles.css
```css
* { box-sizing: border-box; }
body {
  margin: 0;
  height: 100vh;
  display: flex;
  flex-direction: column;
  overflow: hidden;
  background: #f4f4f5;
  color: #1a1020;
  font: 12px/16px "Open Sans", "Noto Sans", sans-serif;
}
button, input, select { font: inherit; color: inherit; }
button { margin: 0; padding: 0; border: 0; background: none; display: flex; align-items: center; justify-content: center; flex: none; }
h1, h2, h3, p { margin: 0; font-size: 12px; font-weight: 400; }
svg { display: block; flex: none; }
.sprite { position: absolute; width: 0; height: 0; }
.fill { flex: 1; }
.tri { width: 7px; height: 4px; }

.titlebar { height: 21px; flex: none; display: flex; align-items: center; gap: 3px; padding-left: 3px; background: #fff; border-top: 1px solid #aaa; }
.app-logo { width: 15px; height: 15px; }
.title { flex: 1; }
.window-buttons { display: flex; padding-right: 1px; }
.window-buttons button { width: 26px; height: 19px; }
.window-buttons svg { width: 14px; height: 14px; }

.menubar { height: 21px; flex: none; display: flex; background: #d9d9d9; padding-left: 1px; }
.menubar button { padding: 0 8px; }
.menubar .account { margin-left: auto; padding: 0 2px; }
.account svg { width: 16px; height: 16px; }

.toolbar { height: 30px; flex: none; display: flex; align-items: center; border-bottom: 1px solid #d8d8d8; }
.tool { position: relative; width: 28px; height: 28px; }
.tool svg { width: 20px; height: 20px; }
.tool.on::before { content: ""; position: absolute; inset: 2px; border: 1px solid #aaa; background: #fff; }
.tool.on svg { position: relative; }
.sep { width: 8px; height: 24px; flex: none; background: linear-gradient(#d8d8d8, #d8d8d8) center / 1px 100% no-repeat; }
.drop { width: 15px; height: 28px; }
.muted { color: #777; }
.snap { gap: 8px; width: 73px; }

.field { height: 22px; display: flex; flex: none; background: #fff; border: 2px solid #bdbdb5; }
.field select {
  appearance: none; flex: 1; min-width: 0; border: 0; border-radius: 0; padding: 0 15px 0 1px; outline: 0;
  background: #fff url("data:image/svg+xml,%3Csvg xmlns='http://www.w3.org/2000/svg' width='15' height='18'%3E%3Cpath d='M0 0H15V18H0Z' fill='%23d4d0c8'/%3E%3Cpath d='M4 7H11L7.500 11Z'/%3E%3C/svg%3E") right center no-repeat;
}
.field .roomy { padding-left: 3px; }
.zoom-field { width: 84px; margin: 0 1px 0 3px; }
.page-size { width: 156px; }
.units { width: 88px; }
.spin input, .mini input { flex: 1; min-width: 0; width: 0; border: 0; padding: 0 1px; background: #fff; outline: 0; }
.stack-spin { display: flex; flex-direction: column; width: 15px; background: #d4d0c8; }
.stack-spin button { flex: 1; }
.stack-spin svg { width: 7px; height: 4px; }

.property-bar { height: 41px; padding-left: 4px; }
.pair { display: grid; grid-template-columns: 16px 94px; column-gap: 2px; margin: 0 2px 0 6px; }
.pair > svg { width: 16px; height: 16px; }
.pair.offset { margin: 0 3px 0 2px; }
.mini { height: 16px; display: flex; border: 1px solid #bdbdb5; outline: 1px solid #d0d0ca; outline-offset: -2px; background: #fff; padding: 1px; }
.mini input { line-height: 12px; height: 12px; }
.flat-spin { display: flex; background: #d4d0c8; }
.flat-spin button { width: 10px; }
.flat-spin svg { width: 7px; height: 4px; }
.labelled { display: flex; align-items: center; gap: 2px; padding: 0 3px 0 4px; }
.labelled > svg { width: 16px; height: 16px; }
.tight { padding-left: 5px; }
.nudge { width: 77px; }
.property-bar .add { margin-left: 7px; }

.workspace { flex: 1; min-height: 0; display: flex; border-bottom: 1px solid #d4d4d8; }
.toolbox { width: 30px; flex: none; display: flex; flex-direction: column; align-items: center; border-right: 1px solid #d6d6d6; }
.toolbox .add { margin-top: 7px; }
.rule { height: 8px; width: 22px; flex: none; background: linear-gradient(#ccc, #ccc) center / 100% 1px no-repeat; }
.toolbox .tool .flyout { position: absolute; right: 3px; bottom: 3px; width: 5px; height: 5px; }

.editor { flex: 1; min-width: 0; display: flex; flex-direction: column; }
.doc-tabs { height: 20px; flex: none; display: flex; background: #e8e8e8; border-bottom: 1px solid #2f9fc4; }
.doc-tab { background: #d9d9d9; padding: 0 3px; width: 111px; justify-content: flex-start; }
.doc-tab.current { background: #cce2fc; width: 78px; padding-left: 4px; }
.new-doc { width: 19px; background: #d9d9d9; }
.new-doc svg { width: 12px; height: 12px; }
.ruler-h { width: 100%; height: 19px; }
.ticks { shape-rendering: crispEdges; }
.marks { fill: #888; font-size: 9px; }
.stage { flex: 1; min-height: 0; display: flex; }
.ruler-v { width: 19px; height: 100%; }
.view { flex: 1; min-width: 0; display: grid; grid-template-columns: 1fr 17px; grid-template-rows: 1fr 17px; }
.canvas { position: relative; background: #fff; overflow: hidden; border-bottom: 1px solid #888; }
.paper { position: absolute; left: 354px; top: 51px; width: 284px; height: 402px; border: 1px solid #999; background: #fff; box-shadow: 6px 4px 0 #bdbdbd; }
.vscroll { display: flex; flex-direction: column; background: #fdfdfd; padding-right: 1px; }
.vscroll button, .hscroll button, .navigator { height: 16px; width: 16px; background: #d4d2cc; border-right: 1px solid #777; border-bottom: 1px solid #777; }
.thumb { background: #d2d0ca; border: 1px solid #eee; border-right: 2px solid #55554f; border-bottom: 2px solid #55554f; }
.track-v { flex: 1; display: grid; grid-template-rows: 106fr 259fr 105fr; }
.track-v .thumb { grid-row: 2; }
.page-row { display: flex; min-width: 0; border-bottom: 1px solid #ddd; }
.page-nav { display: flex; width: 159px; background: #d4d1c9; border-right: 1px solid #777; }
.page-nav button { width: 16px; }
.dim { color: #888; }
.page-nav .dim { border-left: 1px solid #eee; }
.sheet { width: 12px; height: 12px; }
.first { width: 8px; height: 8px; }
.side { width: 5px; height: 8px; }
.count { flex: 1; text-align: center; }
.page-tab { width: 64px; background: linear-gradient(225deg, #f4f4f5 6px, #777 6px, #777 7px, #fff 7px); padding-right: 4px; }
.grip { width: 3px; height: 11px; flex: none; align-self: center; border: solid #888; border-width: 0 1px; }
.page-row .grip { margin: 0 3px 0 auto; }
.hscroll { width: 49%; display: flex; border-left: 1px solid #888; }
.hscroll .thumb { flex: 1; }
.navigator svg { width: 15px; height: 15px; }
.doc-palette { height: 18px; flex: none; display: flex; align-items: center; gap: 4px; padding: 0 10px 0 4px; background: #f6f6f8; }
.doc-palette button { min-width: 8px; }
.doc-palette p { flex: 1; text-align: center; font-style: italic; color: #aaa; }
.play { width: 6px; height: 10px; }
.drop-icon { width: 14px; height: 14px; }
.dark { color: #29314a; }
.light { color: #bbb; opacity: .7; }
.chev { width: 8px; height: 10px; }
.vchev { width: 8px; height: 6px; }
.none { width: 18px; height: 18px; }

.docker-area { width: 292px; flex: none; border-left: 2px solid #d8d8d8; display: grid; grid-template: 20px 1fr / 1fr 20px; padding-left: 3px; }
.docker-title { grid-column: 1 / -1; display: flex; align-items: center; gap: 8px; padding: 0 5px 0 2px; background: #e9e9e9; border-bottom: 1px solid #c8c8c8; }
.docker-title h2 { flex: 1; }
.docker-title svg { width: 9px; height: 8px; }
.docker-tools { height: 28px; display: flex; align-items: center; background: #e9e9e9; border-bottom: 2px solid #888; }
.docker-tools .tool:first-child { margin-left: -2px; }
.row { height: 28px; display: flex; align-items: center; padding: 0 6px 0 1px; }
.row.heading { height: 22px; padding-bottom: 2px; }
.row h3 { flex: 1; padding-left: 23px; font-weight: 700; }
.row-icon { width: 20px; height: 20px; margin-right: 2px; }
.row input[type="checkbox"] { appearance: none; margin: 0; width: 7px; height: 7px; border: 1px solid #aaa; background: #fff; flex: none; }
.wide { width: 134px; }
.unit2 { width: 84px; margin: 0 auto 0 6px; }
.swatch-combo { align-items: stretch; }
.ink { flex: 1; background: #231916; border: 1px solid #fff; }
.stroke { flex: 1; background: linear-gradient(#111, #111) center / calc(100% - 4px) 1px no-repeat; }
.combo-arrow { width: 15px; background: #d4d0c8; display: grid; place-items: center; }
.more { margin-left: 11px; }
.props hr { height: 1px; border: 0; margin: 3px 5px 4px; background: #d4d4d8; }
.miter { width: 118px; margin-right: 8px; }
.trio { display: flex; gap: 2px; margin-left: auto; padding-right: 5px; }
.expander { width: 100%; height: 15px; margin-top: 5px; background: #e9e9e9; }

.side-tabs { background: #e9e9e9; border-left: 1px solid #bbb; display: flex; flex-direction: column; }
.side-tabs button { flex-direction: column; justify-content: flex-start; gap: 5px; padding-top: 3px; background: #dadada; }
.side-tabs span { writing-mode: vertical-rl; line-height: 16px; }
.side-tabs svg { width: 16px; height: 16px; }
.side-tabs .hints { height: 70px; }
.side-tabs .active { height: 135px; background: #aaa; }
.side-tabs .manager { height: 128px; }
.side-tabs .side-add { margin-top: 14px; background: none; }
.side-tabs .side-add svg { width: 20px; height: 20px; }

.palette { width: 19px; flex: none; display: flex; flex-direction: column; align-items: center; padding-top: 4px; border-left: 1px solid #ddd; }
.grip-h { width: 12px; height: 4px; border: solid #888; border-width: 1px 0; }
.palette > button { height: 15px; }
.swatches { width: 18px; height: 485px; overflow: hidden; flex: none; background: #55505c; display: grid; grid-auto-rows: 17px; }
.swatches button { border: solid #55505c; border-width: 0 1px 1px; }
.swatches svg { width: 16px; height: 16px; }
.c-k100 { background: #231916; } .c-k90 { background: #3e3a39; } .c-k80 { background: #595757; }
.c-k70 { background: #6d706f; } .c-k60 { background: #858887; } .c-k50 { background: #9c9e9d; }
.c-k40 { background: #b4b4b5; } .c-k30 { background: #c9caca; } .c-k20 { background: #dddde0; }
.c-k10 { background: #f0f0f4; } .c-white { background: #fff; } .c-blue { background: #1d2088; }
.c-cyan { background: #00a0e9; } .c-green { background: #009944; } .c-yellow { background: #fff100; }
.c-red { background: #e60012; } .c-magenta { background: #e4007f; } .c-purple { background: #ab4189; }
.c-orange { background: #f08300; } .c-pink { background: #f5b2b5; } .c-brown { background: #827263; }
.c-pale { background: #d2cde6; } .c-lilac { background: #a499c9; } .c-sky { background: #6c8ccb; }
.c-violet { background: #7468b1; } .c-mauve { background: #8b80ab; } .c-steel { background: #485f95; }
.c-slate { background: #5b5572; }

.status { height: 34px; flex: none; display: flex; align-items: center; background: #f5f5f7; }
.coords { flex: 1; display: flex; align-items: center; gap: 4px; padding-left: 4px; }
.coords button { width: 14px; height: 14px; border: 1px solid #000; background: #fff; }
.s20 { width: 18px; height: 18px; }
.fill-info { width: 233px; display: flex; align-items: center; gap: 4px; }
.fill-info .s20:first-child { margin-right: 6px; }
.outline-info { width: 222px; height: 22px; display: flex; align-items: center; gap: 4px; padding-left: 4px; border-left: 1px solid #ccc; }
.black-chip { width: 18px; height: 18px; background: #231916; border: 1px solid #666; }

.taskbar { height: 43px; flex: none; display: flex; align-items: center; padding: 0 2px; background: #d4d0c8; border-top: 1px solid #fff; outline: 1px solid #ddd; }
.start { width: 52px; height: 38px; font-weight: 700; border: 1px solid #fff; border-right: 2px solid #555; border-bottom: 2px solid #555; }
.start svg { width: 16px; height: 16px; }
.apps { flex: 1; display: flex; gap: 2px; padding-left: 9px; }
.apps button { width: 48px; height: 38px; }
.apps svg { width: 32px; height: 32px; }
.apps .open { border: 1px solid #fff; border-right: 2px solid #555; border-bottom: 2px solid #555; }
.apps .running { background: #fff; border: 2px solid #555; border-right: 1px solid #fff; border-bottom: 1px solid #fff; }
.lang { width: 18px; }
.tray-rule { width: 2px; height: 22px; background: #888; border-right: 1px solid #fff; }
.tray { width: 206px; height: 38px; margin-left: 3px; display: flex; align-items: center; border: 1px solid #888; border-right-color: #fff; border-bottom-color: #fff; }
.tray button { width: 24px; }
.tray button:first-child { width: 18px; }
.tray svg { width: 18px; height: 18px; }
.tray .t10 { width: 8px; height: 10px; }
.clock { flex: 1; display: flex; flex-direction: column; text-align: center; }
.tray .desk { width: 19px; }
```
